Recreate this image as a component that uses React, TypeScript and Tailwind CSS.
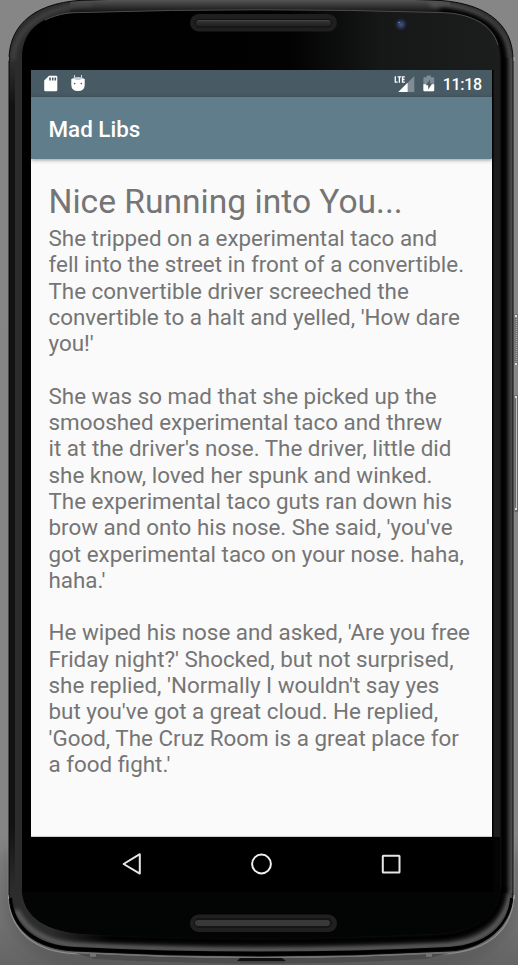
const paragraphs: string[][] = [
  [
    "She tripped on a experimental taco and",
    "fell into the street in front of a convertible.",
    "The convertible driver screeched the",
    "convertible to a halt and yelled, 'How dare",
    "you!'",
  ],
  [
    "She was so mad that she picked up the",
    "smooshed experimental taco and threw",
    "it at the driver's nose. The driver, little did",
    "she know, loved her spunk and winked.",
    "The experimental taco guts ran down his",
    "brow and onto his nose. She said, 'you've",
    "got experimental taco on your nose. haha,",
    "haha.'",
  ],
  [
    "He wiped his nose and asked, 'Are you free",
    "Friday night?' Shocked, but not surprised,",
    "she replied, 'Normally I wouldn't say yes",
    "but you've got a great cloud. He replied,",
    "'Good, The Cruz Room is a great place for",
    "a food fight.'",
  ],
];

const OUTER =
  "M9 60 C9 24 36 0 92 0 Q261 -7 430 0 C486 1 513 24 513 60 V895 C512 929 480 950 449 951 Q261 961 74 951 C38 949 10 931 9 895 Z";
const GLASS =
  "M22 58 C22 28 44 13 82 12.5 Q261 7 440 12.5 C480 14 500 28 500 58 V888 C500 917 474 932 436 934 Q261 942 86 934 C46 932 22 917 22 888 Z";

function Device() {
  return (
    <svg className="absolute inset-0" width="518" height="965" viewBox="0 0 518 965" aria-hidden="true">
      <defs>
        <linearGradient id="desk" x1="0" y1="0" x2="0" y2="1">
          <stop offset="0" stopColor="#868686" />
          <stop offset=".88" stopColor="#858585" />
          <stop offset=".95" stopColor="#747474" />
          <stop offset="1" stopColor="#646464" />
        </linearGradient>
        <linearGradient id="glass" x1="0" y1="0" x2="1" y2="0">
          <stop offset="0" stopColor="#000" />
          <stop offset=".56" stopColor="#020202" />
          <stop offset=".75" stopColor="#161717" />
          <stop offset="1" stopColor="#1c1d1d" />
        </linearGradient>
        <linearGradient id="topRim" x1="0" y1="0" x2="0" y2="1">
          <stop offset="0" stopColor="#555" />
          <stop offset="1" stopColor="#151515" />
        </linearGradient>
        <linearGradient id="sideShade" x1="0" y1="0" x2="0" y2="1">
          <stop offset="0" stopColor="#000" stopOpacity="0" />
          <stop offset=".05" stopColor="#000" stopOpacity=".6" />
          <stop offset=".92" stopColor="#000" stopOpacity=".6" />
          <stop offset="1" stopColor="#000" stopOpacity="0" />
        </linearGradient>
        <linearGradient id="rightRim" x1="0" y1="0" x2="1" y2="0">
          <stop offset="0" stopColor="#101010" />
          <stop offset=".2" stopColor="#000" />
          <stop offset=".45" stopColor="#070707" />
          <stop offset=".75" stopColor="#3c3c3c" />
          <stop offset="1" stopColor="#585654" />
        </linearGradient>
        <linearGradient id="slot" x1="0" y1="0" x2="0" y2="1">
          <stop offset="0" stopColor="#383838" />
          <stop offset="1" stopColor="#1e1e1e" />
        </linearGradient>
        <linearGradient id="innerEdge" gradientUnits="userSpaceOnUse" x1="50" y1="0" x2="502" y2="0">
          <stop offset="0" stopColor="#000" stopOpacity="0" />
          <stop offset=".13" stopColor="#000" />
          <stop offset="1" stopColor="#000" />
        </linearGradient>
        <radialGradient id="lens">
          <stop offset="0" stopColor="#465680" />
          <stop offset=".55" stopColor="#2a3354" />
          <stop offset="1" stopColor="#17181d" />
        </radialGradient>
        <filter id="soft" filterUnits="userSpaceOnUse" x="-20" y="-20" width="560" height="1010">
          <feGaussianBlur stdDeviation="2" />
        </filter>
        <filter id="shade" filterUnits="userSpaceOnUse" x="-20" y="800" width="560" height="200">
          <feGaussianBlur stdDeviation="8" />
        </filter>
        <clipPath id="body">
          <path d={OUTER} />
        </clipPath>
      </defs>
      <rect width="518" height="965" fill="url(#desk)" />
      <path d="M10 850 V900 Q20 952 80 960 H440 Q500 952 512 900 V850" fill="none" stroke="#333" strokeWidth="10" opacity=".4" filter="url(#shade)" />
      <path d="M8.5 58 V896 C10 934 38 952 75 953.5 Q261 963 449 953.5 C488 950 512 930 513.8 897 V58" fill="none" stroke="#8c8c8c" strokeWidth="1.4" />
      <path d="M75 953 Q261 963 449 953 L425 959 Q261 968 95 959 Z" fill="#4c4c4c" />
      <path d="M75 952.5 Q261 962.5 449 952.5" fill="none" stroke="#787878" />
      <path d="M90 953.7h6v3h-6zM426 953.7h6v3h-6z" fill="#757575" />
      <path d="M237 961 L240 958 H282 L286 961 Z" fill="#101010" />
      <path d="M240 962 H284" stroke="#383838" />
      <path d="M8.5 57v4M513.8 57v4M8.5 895v4M513.8 895v4" stroke="#dedede" />
      <g clipPath="url(#body)">
        <path d={OUTER} fill="#2c2c2c" />
        <rect x="70" width="380" height="12" fill="url(#topRim)" />
        <path d="M13 60 C14 30 42 6 92 4" fill="none" stroke="#4c4c4c" strokeWidth="3" filter="url(#soft)" />
        <path d="M430 4 C482 6 508 30 509 60" fill="none" stroke="#5a5a5a" strokeWidth="4" filter="url(#soft)" />
        <path d="M440 12 C482 14 503 32 503 60 V890" fill="none" stroke="#000" strokeWidth="8" filter="url(#soft)" />
        <rect x="500" y="58" width="13" height="835" fill="url(#rightRim)" />
        <rect x="9" y="65" width="6" height="825" fill="url(#sideShade)" />
        <path d="M16 910 C26 930 46 943 75 945 Q261 954.5 449 945 C484 942 505 924 510 893" fill="none" stroke="#6c6c6c" strokeWidth="4" filter="url(#soft)" />
        <path d="M50 932 Q70 936 86 937 Q261 945 436 937 C476 935 501 917 502 888" fill="none" stroke="url(#innerEdge)" strokeWidth="9" filter="url(#soft)" />
        <path d="M9.8 898 C12 930 38 948 75 949.2 Q261 958.5 449 949.2 C486 947 510 928 512.3 898" fill="none" stroke="#000" strokeWidth="4.5" />
      </g>
      <path d={OUTER} fill="none" stroke="#080808" strokeWidth="1" />
      <path d={GLASS} fill="url(#glass)" />
      <path d="M22 837 H500 V888 C500 917 474 932 436 934 Q261 942 86 934 C46 932 22 917 22 888 Z" fill="#030404" />
      <rect x="22" y="837" width="471" height="55" fill="#000" />
      <path d="M45 20 C60 13 72 12.5 82 12.5 Q261 7 440 12.5 C470 13 492 24 498 45" fill="none" stroke="#4c4c4c" strokeWidth="1" />
      <rect x="492" y="70" width="1.5" height="767" fill="#000" />
      <rect x="190" y="14" width="147" height="17.5" rx="8.7" fill="#1f1f1f" />
      <rect x="195" y="19" width="137" height="8.5" rx="4.2" fill="#111" />
      <rect x="196" y="20" width="135" height="6.5" rx="3.2" fill="url(#slot)" />
      <path d="M198 20.5 H329" stroke="#454545" />
      <rect x="190" y="914.5" width="147" height="17.5" rx="8.7" fill="#202020" />
      <rect x="194" y="918" width="138" height="10" rx="5" fill="#151515" />
      <rect x="195" y="920" width="135" height="6" rx="3" fill="#393939" />
      <circle cx="401" cy="24" r="8" fill="#191a1b" />
      <circle cx="401" cy="24.5" r="6" fill="url(#lens)" />
      <circle cx="399" cy="22.5" r=".8" fill="#7790c0" />
      <rect x="514.5" y="314" width="4" height="51" fill="#6f6f6f" />
      <path d="M516.5 317 V363" stroke="#a5a5a5" strokeWidth="1.5" strokeDasharray="1 1" />
      <rect x="514.5" y="395" width="4" height="117" fill="#686868" />
      <path d="M516.5 398 V509" stroke="#bdbdbd" />
      <path d="M515 315h2v2h-2zM515 363h2v2h-2zM515 396h2v2h-2zM515 508h2v2h-2z" fill="#ddd" />
    </svg>
  );
}

function StatusBar() {
  return (
    <header className="flex h-[27px] shrink-0 items-center bg-[#485a64] pl-[13px] pr-[9px]">
      <svg width="14" height="17" viewBox="0 0 14 17" aria-label="SD card">
        <path d="M5 .8 H12 Q13.3 .8 13.3 2 V15 Q13.3 16.2 12 16.2 H1.4 Q.2 16.2 .2 15 V5.4 Z" fill="#fff" />
        <path d="M5.2 2.5h1.6v3H5.2zM7.9 2.5h1.6v3H7.9zM10.5 2.5h1.6v3h-1.6z" fill="#485a64" />
      </svg>
      <svg className="ml-[13px]" width="14" height="18" viewBox="0 0 14 18" aria-label="Debugging">
        <path d="M3.5 4 V0 M10.5 4 V0" stroke="#cfd5d8" strokeWidth="1.1" />
        <path d="M3 2.4 Q7 1.4 11 2.4 L13 4.5 H1 Z" fill="#c8ced1" />
        <path d="M.3 4 Q1.8 3.2 3.5 4 Q7 5 10.5 4 Q12.2 3.2 13.7 4 V10 Q13.5 16 7 16 Q.5 16 .3 10 Z" fill="#fff" />
        <circle cx="3.7" cy="8.6" r=".8" fill="#485a64" />
        <circle cx="10.3" cy="8.6" r=".8" fill="#485a64" />
      </svg>
      <svg className="ml-auto" width="21" height="18" viewBox="0 0 21 18" aria-label="Mobile signal">
        <path d="M20.3 1 V17 H4.3 Z" fill="#7f8c93" />
        <path d="M13.6 7.7 V17 H4.3 Z" fill="#fff" />
        <rect width="11" height="8.6" fill="#485a64" />
        <path d="M1.3 1.2 V7.2 H3.6 M3.6 1.9 H7.2 M5.4 1.9 V7.8 M10.8 1.9 H8.5 V7.2 H10.8 M8.5 4.5 H10.5" fill="none" stroke="#fff" strokeWidth="1.3" />
      </svg>
      <svg className="ml-[8px]" width="12" height="17" viewBox="0 0 12 17" aria-label="Battery charging">
        <path d="M3.6 .5h4.3v1.8h2.3q1 0 1 1v12q0 1-1 1H1.4q-1 0-1-1v-12q0-1 1-1h2.2z" fill="#7f8c93" />
        <path d="M.4 9.3h10.8v6q0 1-1 1H1.4q-1 0-1-1z" fill="#fff" />
        <path d="M7.2 4.3 L2.8 10.3 H5.2 V14.4 L9.2 8.5 H6.8 Z" fill="#485a64" />
      </svg>
      <svg className="ml-[8px]" width="40" height="20" aria-label="11:18">
        <text x="-.3" y="15.5" fill="#fff" fontSize="16" fontWeight="500" textLength="39.5" className="font-['Roboto',sans-serif]">
          11:18
        </text>
      </svg>
    </header>
  );
}

export default function App() {
  return (
    <div className="relative h-[965px] w-[518px] overflow-hidden pl-[31px] pt-[70px] font-['Roboto',sans-serif]">
      <Device />
      <div className="relative flex w-[461px] flex-col">
        <StatusBar />
        <div className="z-10 flex h-[62px] shrink-0 items-center bg-[#607d8b] pl-[17.5px] pt-[3px] shadow-[0_1px_4px_rgba(0,0,0,0.4)]">
          <h1 className="text-[22.4px] font-medium text-white">Mad Libs</h1>
        </div>
        <main className="h-[678px] border-b border-[#ccc] bg-[#fafafa] pl-[17.5px] pt-[22px] text-[#757575]">
          <h2 className="h-[44px] whitespace-nowrap text-[33.6px] leading-[42px]">Nice Running into You...</h2>
          <div className="flex flex-col gap-[26.3px] text-[22.4px] leading-[26.3px]">
            {paragraphs.map((lines, i) => (
              <p key={i}>
                {lines.map((line) => (
                  <span key={line} className="block h-[26.3px] whitespace-nowrap">
                    {line}
                  </span>
                ))}
              </p>
            ))}
          </div>
        </main>
        <nav className="flex h-[53px] items-center justify-between bg-black pl-[90px] pr-[90px]">
          <svg width="22" height="24" viewBox="0 0 22 24" aria-label="Back">
            <path d="M18.8 2.2 V21.6 L2.6 12 Z" fill="none" stroke="#e6e6e6" strokeWidth="2" strokeLinejoin="round" />
          </svg>
          <svg width="24" height="24" viewBox="0 0 24 24" aria-label="Home">
            <circle cx="11.5" cy="12" r="9.4" fill="none" stroke="#f0f0f0" strokeWidth="2" />
          </svg>
          <svg width="22" height="24" viewBox="0 0 22 24" aria-label="Recents">
            <rect x="2.8" y="3.7" width="16.7" height="16.7" rx=".5" fill="none" stroke="#e6e6e6" strokeWidth="2" />
          </svg>
        </nav>
      </div>
    </div>
  );
}
